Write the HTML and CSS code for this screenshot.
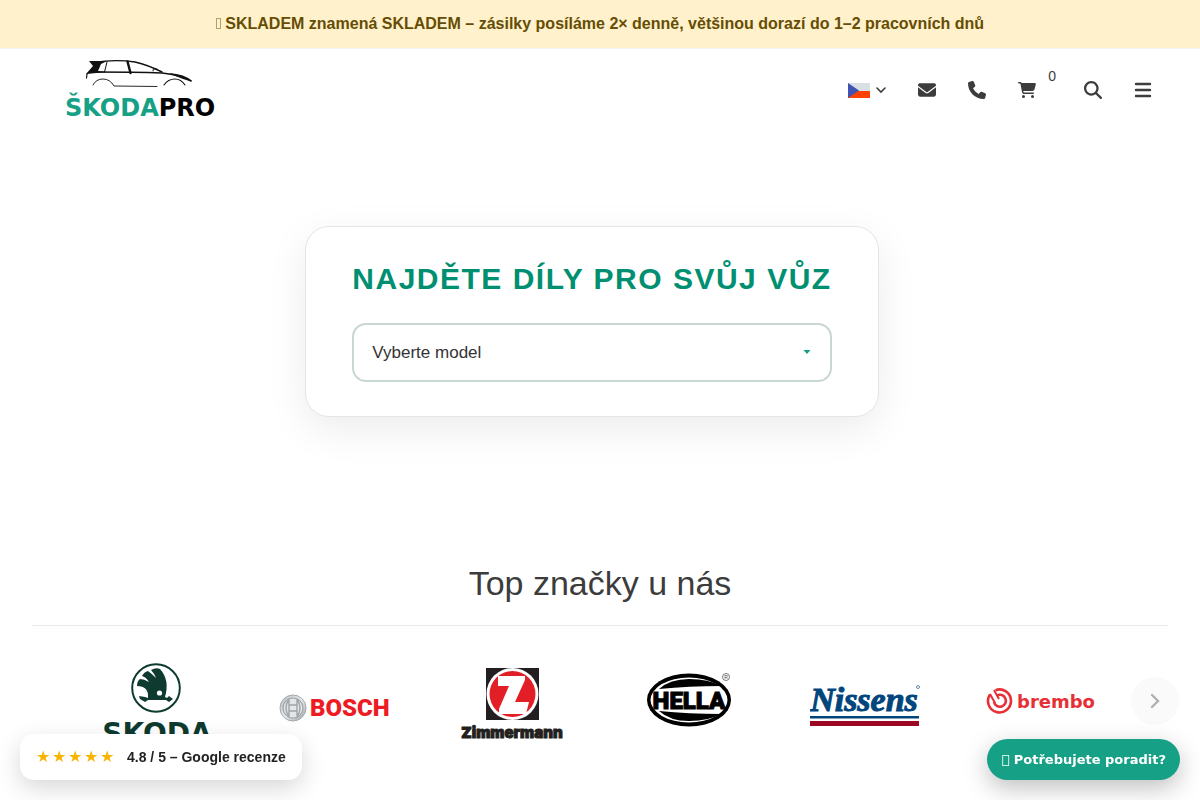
FILE: index.html
```
<!DOCTYPE html>
<html lang="cs">
<head>
    <meta charset="UTF-8">
    <meta name="viewport" content="width=device-width, initial-scale=1.0">
    <title>ŠKODAPRO</title>
    <link rel="stylesheet" href="styles.css">
</head>
<body>
    <div class="top-banner"><span class="banner-box"></span> SKLADEM znamená SKLADEM – zásilky posíláme 2× denně, většinou dorazí do 1–2 pracovních dnů</div>

    <header class="header">
        <a href="#" class="logo" aria-label="ŠKODAPRO">
            <svg width="150" height="64" viewBox="0 0 150 64">
                <g fill="none" stroke="#111" stroke-linecap="round">
                    <path d="M21.500 20 L22 16 L26 13" stroke-width="1.200"/>
                    <path d="M29 4.500 Q50 1 70 4 Q83 7 97 14" stroke-width="1.400"/>
                    <path d="M42 4 L39.500 14" stroke-width="1"/>
                    <path d="M62.500 3.500 L65.500 15" stroke-width="2.400"/>
                    <path d="M28 14 Q70 14 97 15 Q116 17 126 23" stroke-width="1.600"/>
                    <path d="M88 13 Q87 10 92 11" stroke-width="1"/>
                    <path d="M28 27 Q31 21 38 21 Q45 21 49 28 L92 28.500" stroke-width="0.900"/>
                    <path d="M99 27 Q103 21 110 21 Q116 21 120 27" stroke-width="1.100"/>
                </g>
                <path d="M24 3 L42 3 L36 6 L33 13 L42 14 L21 16 L28 8 Z" fill="#111"/>
                <path d="M104 15 Q120 16 127 23 Q118 22 104 15Z" fill="#111"/>
                <text x="0" y="58" class="logo-text"><tspan fill="#16a085">ŠKODA</tspan><tspan fill="#000">PRO</tspan></text>
            </svg>
        </a>
        <nav class="header-nav">
            <button type="button" class="lang-button" aria-label="Jazyk">
                <svg width="22" height="15" viewBox="0 0 22 15">
                    <path d="M0 0H22V8H0Z" fill="#d9e0e3"/>
                    <path d="M0 8H22V15H0Z" fill="#ff4100"/>
                    <path d="M0 0L11 7.500L0 15Z" fill="#4152b3"/>
                </svg>
                <svg width="10" height="8" viewBox="0 0 10 8"><path d="M1 2l4 4 4-4" fill="none" stroke="#3c3c3c" stroke-width="1.600" stroke-linecap="round"/></svg>
            </button>
            <a href="#" class="nav-icon" aria-label="E-mail">
                <svg width="18" height="18" viewBox="0 0 512 512"><path d="M48 64C21.500 64 0 85.500 0 112c0 15.100 7.100 29.300 19.200 38.400L236.800 313.600c11.400 8.500 27 8.500 38.400 0L492.800 150.400c12.100-9.100 19.200-23.300 19.200-38.400 0-26.500-21.500-48-48-48H48zM0 176v208c0 35.300 28.700 64 64 64h384c35.300 0 64-28.700 64-64V176L294.400 339.200c-22.800 17.100-54 17.100-76.800 0L0 176z"/></svg>
            </a>
            <a href="#" class="nav-icon" aria-label="Telefon">
                <svg width="18" height="18" viewBox="0 0 512 512"><path d="M164.900 24.600c-7.700-18.600-28-28.500-47.400-23.200l-88 24C12.100 30.200 0 46 0 64c0 247.400 200.600 448 448 448 18 0 33.800-12.100 38.600-29.500l24-88c5.300-19.400-4.600-39.700-23.200-47.400l-96-40c-16.300-6.800-35.200-2.100-46.300 11.600L304.700 368C234.300 334.700 177.300 277.700 144 207.300L193.300 167c13.700-11.200 18.400-30 11.600-46.300l-40-96z"/></svg>
            </a>
            <a href="#" class="nav-icon cart" aria-label="Košík">
                <svg width="18" height="16" viewBox="0 0 576 512"><path d="M0 24C0 10.700 10.700 0 24 0h45.500c22 0 41.500 12.800 50.600 32h411c26.300 0 45.500 25 38.600 50.400l-41 152.300c-8.500 31.400-37 53.300-69.500 53.300H170.700l5.400 28.500c2.200 11.300 12.100 19.500 23.600 19.500H488c13.300 0 24 10.700 24 24s-10.700 24-24 24H199.700c-34.600 0-64.300-24.600-70.700-58.500L77.400 54.500c-.7-3.800-4-6.500-7.900-6.500H24C10.700 48 0 37.300 0 24zM128 464a48 48 0 1 1 96 0 48 48 0 1 1-96 0zm336-48a48 48 0 1 1 0 96 48 48 0 1 1 0-96z"/></svg>
                <span class="cart-count">0</span>
            </a>
            <button type="button" class="nav-icon" aria-label="Hledat">
                <svg width="18" height="18" viewBox="0 0 512 512"><path d="M416 208c0 45.900-14.900 88.300-40 122.700L502.600 457.400c12.500 12.500 12.500 32.800 0 45.300s-32.800 12.500-45.300 0L330.700 376c-34.400 25.200-76.800 40-122.700 40C93.100 416 0 322.900 0 208S93.100 0 208 0s208 93.100 208 208zM208 352a144 144 0 1 0 0-288 144 144 0 1 0 0 288z"/></svg>
            </button>
            <button type="button" class="nav-icon" aria-label="Menu">
                <svg width="18" height="16" viewBox="0 0 18 16"><path d="M2 2h14M2 8h14M2 14h14" stroke="#3c3c3c" stroke-width="2.400" stroke-linecap="round"/></svg>
            </button>
        </nav>
    </header>

    <main>
        <section class="hero">
            <form class="finder">
                <h1><label for="model">NAJDĚTE DÍLY PRO SVŮJ VŮZ</label></h1>
                <div class="select-wrap">
                    <select id="model" name="model">
                        <option>Vyberte model</option>
                    </select>
                    <svg class="select-arrow" width="8" height="5" viewBox="0 0 8 5"><path d="M0.500 1h7L4 5z" fill="#16a085"/></svg>
                </div>
            </form>
        </section>

        <section class="brands">
            <h2>Top značky u nás</h2>
            <div class="brand-row">
                <a href="#" class="brand" aria-label="Škoda">
                    <svg width="110" height="90" viewBox="0 0 110 90">
                        <circle cx="54" cy="29" r="23.800" fill="#fff" stroke="#0e3a2f" stroke-width="2"/>
                        <path d="M46 39 Q47 27 35 27 Q35 22 38 20 Q42 20 47 23 Q44 18 40 17 Q42 13 46 12 Q50 15 54 19 Q52 14 49 11 Q54 8 58 10 Q68 21 63 38 L65 39 L67 37 L71 40 L67 43 L64 41 L46 41 L43 43 L38 40 L37 37 L43 38 Z" fill="#0e3a2f"/>
                        <circle cx="57.500" cy="34" r="2.600" fill="#fff"/>
                        <text x="55" y="84" class="word-skoda" text-anchor="middle">SKODA</text>
                    </svg>
                </a>
                <a href="#" class="brand" aria-label="Bosch">
                    <svg width="112" height="84" viewBox="0 0 112 84">
                        <defs>
                            <linearGradient id="steel" x1="0" y1="0" x2="1" y2="1">
                                <stop offset="0" stop-color="#b4b8bb"/>
                                <stop offset="0.500" stop-color="#eceeef"/>
                                <stop offset="1" stop-color="#9a9fa3"/>
                            </linearGradient>
                        </defs>
                        <circle cx="15" cy="49" r="13" fill="url(#steel)" stroke="#a5a9ac"/>
                        <circle cx="15" cy="49" r="10" fill="#e3e5e6" stroke="#a0a4a8" stroke-width="1.200"/>
                        <path d="M11 40Q5 49 11 58M19 40Q25 49 19 58M11 41V57M19 41V57M11 46H19M11 52H19" fill="none" stroke="#a0a4a8" stroke-width="1.400"/>
                        <text x="32" y="57" class="word-bosch">BOSCH</text>
                    </svg>
                </a>
                <a href="#" class="brand" aria-label="Zimmermann">
                    <svg width="110" height="84" viewBox="0 0 110 84">
                        <path d="M30 9H83V61H30Z" fill="#231f20"/>
                        <circle cx="56.500" cy="35" r="26" fill="#fff"/>
                        <circle cx="56.500" cy="35" r="23" fill="#e21f26"/>
                        <path d="M42 17H69V21L59 43H73L70 55H43V50L53 27H42Z" fill="#fff"/>
                        <text x="56" y="79" class="word-zimmermann" text-anchor="middle">Zimmermann</text>
                    </svg>
                </a>
                <a href="#" class="brand" aria-label="Hella">
                    <svg width="110" height="84" viewBox="0 0 110 84">
                        <ellipse cx="56" cy="41" rx="42" ry="26.500" fill="#000"/>
                        <ellipse cx="56" cy="41" rx="38.500" ry="22.500" fill="#fff"/>
                        <path d="M26 30Q37 20 56 20Q76 20 88 27Q56 27 26 30ZM26 52Q37 62 56 62Q76 62 88 55Q56 55 26 52Z" fill="#000"/>
                        <text x="56" y="50" class="word-hella" text-anchor="middle">HELLA</text>
                        <circle cx="93" cy="18" r="3.500" fill="none" stroke="#444" stroke-width="0.700"/>
                        <text x="93" y="20" class="mark" text-anchor="middle">R</text>
                    </svg>
                </a>
                <a href="#" class="brand" aria-label="Nissens">
                    <svg width="110" height="84" viewBox="0 0 110 84">
                        <text x="54" y="52" class="word-nissens" text-anchor="middle">Nissens</text>
                        <path d="M0 57H109V59.500H0Z" fill="#00457c"/>
                        <path d="M0 62H109V67H0Z" fill="#9c0824"/>
                        <circle cx="108" cy="28" r="1.500" fill="none" stroke="#00457c" stroke-width="0.600"/>
                    </svg>
                </a>
                <a href="#" class="brand" aria-label="Brembo">
                    <svg width="112" height="84" viewBox="0 0 112 84">
                        <g fill="none" stroke="#e63035">
                            <path d="M9.500 31.200A11.500 11.500 0 1 1 4 35.500" stroke-width="2.600"/>
                            <path d="M4 35L9 44M8 31L13 40" stroke-width="2"/>
                            <path d="M11 36.500A6 6 0 1 1 8 43" stroke-width="2.600"/>
                        </g>
                        <text x="31" y="49" class="word-brembo">brembo</text>
                    </svg>
                </a>
            </div>
            <button type="button" class="next-button" aria-label="Další">
                <svg width="10" height="16" viewBox="0 0 10 16"><path d="M2 2l6 6-6 6" fill="none" stroke="#b0b0b0" stroke-width="2.400" stroke-linecap="round"/></svg>
            </button>
        </section>
    </main>

    <a href="#" class="reviews">
        <span class="stars">★★★★★</span>
        <span>4.8 / 5 – Google recenze</span>
    </a>
    <button type="button" class="help-button">&#xf075; Potřebujete poradit?</button>
</body>
</html>
```

FILE: styles.css
```
* {
    margin: 0;
    padding: 0;
    box-sizing: border-box;
}

body {
    font-family: "Liberation Sans", Arial, sans-serif;
    background-color: #fff;
    color: #3c3c3c;
}

button {
    border: none;
    background: none;
    font: inherit;
    color: inherit;
    cursor: pointer;
}

a {
    color: inherit;
    text-decoration: none;
}

svg {
    display: block;
}

.top-banner {
    background-color: #fff1cc;
    color: #664d03;
    border-bottom: 1px solid #f3f3f3;
    padding: 12px 16px;
    font-size: 16px;
    font-weight: bold;
    line-height: 24px;
    text-align: center;
}

.banner-box {
    display: inline-block;
    width: 5px;
    height: 11px;
    border: 1px solid #b5a26a;
}

/* Header */
.header {
    display: flex;
    justify-content: space-between;
    align-items: center;
    padding: 9px 48px 7px 65px;
}

.logo-text {
    font-family: "DejaVu Sans", sans-serif;
    font-size: 24px;
    font-weight: bold;
}

.header-nav {
    display: flex;
    align-items: center;
    gap: 32px;
}

.lang-button {
    display: flex;
    align-items: center;
    gap: 6px;
}

.nav-icon {
    display: block;
    fill: #3c3c3c;
}

.cart {
    display: flex;
    align-items: center;
    gap: 12px;
    margin-right: -4px;
}

.cart-count {
    font-size: 14px;
    line-height: 16px;
    padding-bottom: 28px;
}

/* Car finder */
.hero {
    display: flex;
    justify-content: center;
    padding: 97px 16px 144px 0;
}

.finder {
    padding: 34px 46px;
    background: #fff;
    border: 1px solid #e5e5e5;
    border-radius: 24px;
    box-shadow: 0 12px 40px rgba(0, 0, 0, 0.08);
}

.finder h1 {
    margin-bottom: 26px;
    color: #008f70;
    font-size: 30px;
    line-height: 36px;
    letter-spacing: 1.5px;
}

.select-wrap {
    position: relative;
}

.select-wrap select {
    width: 100%;
    padding: 17px 18px;
    appearance: none;
    background: #fff;
    border: 2px solid #c9d6d2;
    border-radius: 14px;
    color: #333;
    font-family: inherit;
    font-size: 17px;
    line-height: 21px;
}

.select-arrow {
    position: absolute;
    top: 26px;
    right: 21px;
    pointer-events: none;
}

/* Brands */
.brands {
    position: relative;
    padding: 0 32px;
}

.brands h2 {
    padding-bottom: 20px;
    border-bottom: 1px solid #e9e9e9;
    font-size: 34px;
    font-weight: normal;
    line-height: 44px;
    text-align: center;
}

.brand-row {
    display: grid;
    grid-template-columns: repeat(6, 1fr);
    padding: 33px 38px 0 36px;
}

.brand {
    display: flex;
    justify-content: center;
    align-items: flex-start;
}

.next-button {
    position: absolute;
    top: 116px;
    right: 21px;
    display: flex;
    justify-content: center;
    align-items: center;
    width: 48px;
    height: 48px;
    border-radius: 50%;
    background: #fafafa;
}

.word-skoda {
    font-family: "DejaVu Sans", sans-serif;
    font-size: 28px;
    font-weight: bold;
    fill: #0e3a2f;
}

.word-bosch {
    font-family: Roboto, sans-serif;
    font-size: 24px;
    font-weight: 900;
    fill: #ed1c24;
}

.word-zimmermann {
    font-family: Inter, sans-serif;
    font-size: 15px;
    font-weight: 900;
    fill: #231f20;
    stroke: #231f20;
    stroke-width: 1px;
}

.word-hella {
    font-family: Roboto, sans-serif;
    font-size: 24px;
    font-weight: 900;
    fill: #000;
    stroke: #000;
    stroke-width: 1px;
}

.word-nissens {
    font-family: "Liberation Serif", serif;
    font-size: 34px;
    font-weight: bold;
    font-style: italic;
    fill: #00457c;
    stroke: #00457c;
    stroke-width: 1px;
}

.word-brembo {
    font-family: "DejaVu Sans", sans-serif;
    font-size: 18px;
    font-weight: bold;
    fill: #e63035;
}

.mark {
    font-size: 5px;
    fill: #444;
}

/* Floating widgets */
.reviews {
    position: fixed;
    left: 20px;
    bottom: 20px;
    display: flex;
    align-items: center;
    gap: 11px;
    padding: 12px 16px;
    background: #fff;
    border-radius: 14px;
    box-shadow: 0 8px 24px rgba(0, 0, 0, 0.16);
    color: #222;
    font-size: 14px;
    font-weight: bold;
    line-height: 22px;
}

.stars {
    color: #f4b400;
    font-size: 16px;
    font-weight: normal;
    letter-spacing: 2px;
}

.help-button {
    position: fixed;
    right: 20px;
    bottom: 20px;
    padding: 12px 14px;
    background: #16a085;
    border-radius: 24px;
    box-shadow: 0 8px 24px rgba(0, 0, 0, 0.25);
    color: #fff;
    font-family: "DejaVu Sans", sans-serif;
    font-size: 13px;
    font-weight: bold;
    line-height: 17px;
}
```
